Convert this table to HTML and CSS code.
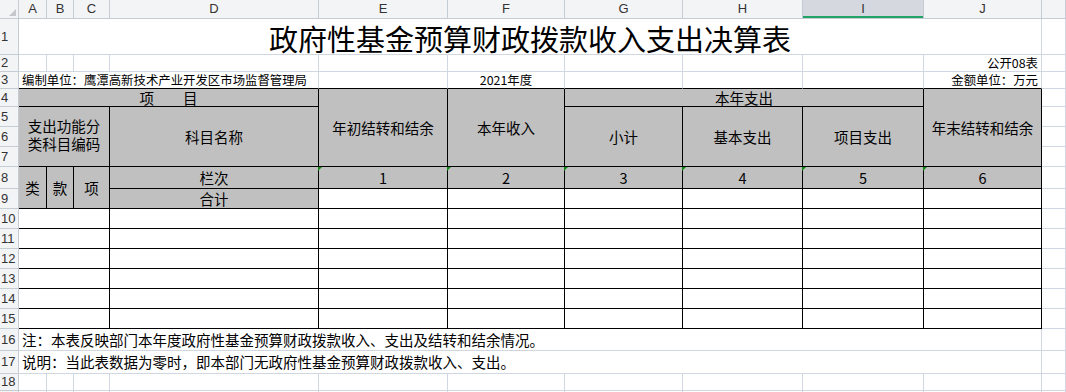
FILE: index.html
```html
<!DOCTYPE html>
<html lang="zh-CN">
<head>
<meta charset="utf-8">
<title>政府性基金预算财政拨款收入支出决算表</title>
<link rel="stylesheet" href="styles.css">
</head>
<body>
<div class="sheet">
  <!-- column headers -->
  <div class="cell hd corner"></div>
  <div class="cell hd">A</div>
  <div class="cell hd">B</div>
  <div class="cell hd">C</div>
  <div class="cell hd">D</div>
  <div class="cell hd">E</div>
  <div class="cell hd">F</div>
  <div class="cell hd">G</div>
  <div class="cell hd">H</div>
  <div class="cell hd sel">I</div>
  <div class="cell hd">J</div>
  <div class="cell hd k"></div>

  <!-- row 1 -->
  <div class="cell hd rh">1</div>
  <div class="cell s10 title">政府性基金预算财政拨款收入支出决算表</div>
  <div class="cell k"></div>

  <!-- row 2 -->
  <div class="cell hd rh">2</div>
  <div class="cell"></div><div class="cell"></div><div class="cell"></div>
  <div class="cell"></div><div class="cell"></div><div class="cell"></div>
  <div class="cell"></div><div class="cell"></div><div class="cell"></div>
  <div class="cell right small">公开08表</div>
  <div class="cell k"></div>

  <!-- row 3 -->
  <div class="cell hd rh">3</div>
  <div class="cell s4 left small bb">编制单位：鹰潭高新技术产业开发区市场监督管理局</div>
  <div class="cell bb"></div>
  <div class="cell bb small">2021年度</div>
  <div class="cell bb"></div>
  <div class="cell bb"></div>
  <div class="cell bb"></div>
  <div class="cell right small bb">金额单位：万元</div>
  <div class="cell k"></div>

  <!-- row 4 -->
  <div class="cell hd rh">4</div>
  <div class="cell s4 tb g">项　　目</div>
  <div class="cell r4 tb g">年初结转和结余</div>
  <div class="cell r4 tb g">本年收入</div>
  <div class="cell s3 tb g">本年支出</div>
  <div class="cell r4 tb g">年末结转和结余</div>
  <div class="cell k"></div>

  <!-- row 5 -->
  <div class="cell hd rh">5</div>
  <div class="cell s3 r3 tb g two"><span class="ln">支出功能分</span><span class="ln">类科目编码</span></div>
  <div class="cell r3 tb g">科目名称</div>
  <div class="cell r3 tb g">小计</div>
  <div class="cell r3 tb g">基本支出</div>
  <div class="cell r3 tb g">项目支出</div>
  <div class="cell k"></div>

  <!-- row 6, 7 -->
  <div class="cell hd rh">6</div>
  <div class="cell k"></div>
  <div class="cell hd rh">7</div>
  <div class="cell k"></div>

  <!-- row 8 -->
  <div class="cell hd rh">8</div>
  <div class="cell r2 tb g">类</div>
  <div class="cell r2 tb g">款</div>
  <div class="cell r2 tb g">项</div>
  <div class="cell tb g">栏次</div>
  <div class="cell tb g tri">1</div>
  <div class="cell tb g tri">2</div>
  <div class="cell tb g tri">3</div>
  <div class="cell tb g tri">4</div>
  <div class="cell tb g tri">5</div>
  <div class="cell tb g tri">6</div>
  <div class="cell k"></div>

  <!-- row 9 -->
  <div class="cell hd rh">9</div>
  <div class="cell tb g">合计</div>
  <div class="cell tb"></div><div class="cell tb"></div><div class="cell tb"></div>
  <div class="cell tb"></div><div class="cell tb"></div><div class="cell tb"></div>
  <div class="cell k"></div>

  <!-- rows 10-15 -->
  <div class="cell hd rh">10</div>
  <div class="cell s3 tb"></div><div class="cell tb"></div>
  <div class="cell tb"></div><div class="cell tb"></div><div class="cell tb"></div>
  <div class="cell tb"></div><div class="cell tb"></div><div class="cell tb"></div>
  <div class="cell k"></div>

  <div class="cell hd rh">11</div>
  <div class="cell s3 tb"></div><div class="cell tb"></div>
  <div class="cell tb"></div><div class="cell tb"></div><div class="cell tb"></div>
  <div class="cell tb"></div><div class="cell tb"></div><div class="cell tb"></div>
  <div class="cell k"></div>

  <div class="cell hd rh">12</div>
  <div class="cell s3 tb"></div><div class="cell tb"></div>
  <div class="cell tb"></div><div class="cell tb"></div><div class="cell tb"></div>
  <div class="cell tb"></div><div class="cell tb"></div><div class="cell tb"></div>
  <div class="cell k"></div>

  <div class="cell hd rh">13</div>
  <div class="cell s3 tb"></div><div class="cell tb"></div>
  <div class="cell tb"></div><div class="cell tb"></div><div class="cell tb"></div>
  <div class="cell tb"></div><div class="cell tb"></div><div class="cell tb"></div>
  <div class="cell k"></div>

  <div class="cell hd rh">14</div>
  <div class="cell s3 tb"></div><div class="cell tb"></div>
  <div class="cell tb"></div><div class="cell tb"></div><div class="cell tb"></div>
  <div class="cell tb"></div><div class="cell tb"></div><div class="cell tb"></div>
  <div class="cell k"></div>

  <div class="cell hd rh">15</div>
  <div class="cell s3 tb"></div><div class="cell tb"></div>
  <div class="cell tb"></div><div class="cell tb"></div><div class="cell tb"></div>
  <div class="cell tb"></div><div class="cell tb"></div><div class="cell tb"></div>
  <div class="cell k"></div>

  <!-- row 16, 17 -->
  <div class="cell hd rh">16</div>
  <div class="cell s10 left">注：本表反映部门本年度政府性基金预算财政拨款收入、支出及结转和结余情况。</div>
  <div class="cell k"></div>

  <div class="cell hd rh">17</div>
  <div class="cell s10 left">说明：当此表数据为零时，即本部门无政府性基金预算财政拨款收入、支出。</div>
  <div class="cell k"></div>

  <!-- row 18 -->
  <div class="cell hd rh">18</div>
  <div class="cell"></div><div class="cell"></div><div class="cell"></div>
  <div class="cell"></div><div class="cell"></div><div class="cell"></div>
  <div class="cell"></div><div class="cell"></div><div class="cell"></div>
  <div class="cell"></div>
  <div class="cell k"></div>

  <!-- row 19 (only its top edge is visible) -->
  <div class="cell hd rh"></div>
  <div class="cell"></div><div class="cell"></div><div class="cell"></div>
  <div class="cell"></div><div class="cell"></div><div class="cell"></div>
  <div class="cell"></div><div class="cell"></div><div class="cell"></div>
  <div class="cell"></div>
  <div class="cell k"></div>
</div>
</body>
</html>
```
FILE: styles.css
```css
html, body {
  margin: 0;
  padding: 0;
  background: #ffffff;
  overflow: hidden;
}

body {
  font-family: "Noto Sans CJK SC", "Liberation Sans", sans-serif;
  color: #000;
}

.sheet {
  display: grid;
  width: 1066px;
  grid-template-columns: 19px 28px 27px 36px 209px 129px 117px 118px 120px 121px 118px 1fr;
  grid-template-rows: 19px 36px 17px 17px 18px 20px 20px 20px 22px 20px 20px 20px 20px 20px 20px 20px 22px 23px 17px 17px;
}

.cell {
  box-sizing: border-box;
  position: relative;
  display: flex;
  align-items: center;
  justify-content: center;
  text-align: center;
  border-right: 1px solid #d0d6e2;
  border-bottom: 1px solid #d0d6e2;
  font-size: 14.5px;
  line-height: 1.2;
  white-space: nowrap;
  min-width: 0;
}

/* headers */
.hd {
  background: #f3f4f6;
  border-right-color: #c6ccd5;
  border-bottom-color: #c6ccd5;
  font-family: "Liberation Sans", Arial, sans-serif;
  font-size: 13px;
  color: #333;
}

.rh {
  grid-column: 1;
  justify-content: flex-start;
  padding-left: 1px;
}

.k {
  grid-column: 12;
}

.sel {
  background: #d5d9df;
  box-shadow: inset 0 -2px 0 #21a366;
}

.corner::after {
  content: "";
  position: absolute;
  right: 2px;
  bottom: 2px;
  width: 0;
  height: 0;
  border-left: 7px solid transparent;
  border-bottom: 7px solid #c4c7cc;
}

/* spans */
.s3 { grid-column: span 3; }
.s4 { grid-column: span 4; }
.s10 { grid-column: span 10; }
.r2 { grid-row: span 2; }
.r3 { grid-row: span 3; }
.r4 { grid-row: span 4; }

/* text */
.title {
  font-size: 29px;
  padding-top: 3px;
  font-weight: 400;
}

.small {
  font-size: 12.4px;
}

.two {
  flex-direction: column;
  padding-bottom: 4px;
}

.ln {
  display: block;
  line-height: 18px;
  height: 18px;
}

.left {
  justify-content: flex-start;
  padding-left: 3px;
}

.right {
  justify-content: flex-end;
  padding-right: 3px;
}

/* table */
.bb {
  border-bottom-color: #000;
}

.tb {
  border-right-color: #000;
  border-bottom-color: #000;
}

.g {
  background: #c0c0c0;
}

.tri::before {
  content: "";
  position: absolute;
  left: -1px;
  top: 0;
  width: 0;
  height: 0;
  border-top: 4px solid #138a13;
  border-right: 4px solid transparent;
}
```
